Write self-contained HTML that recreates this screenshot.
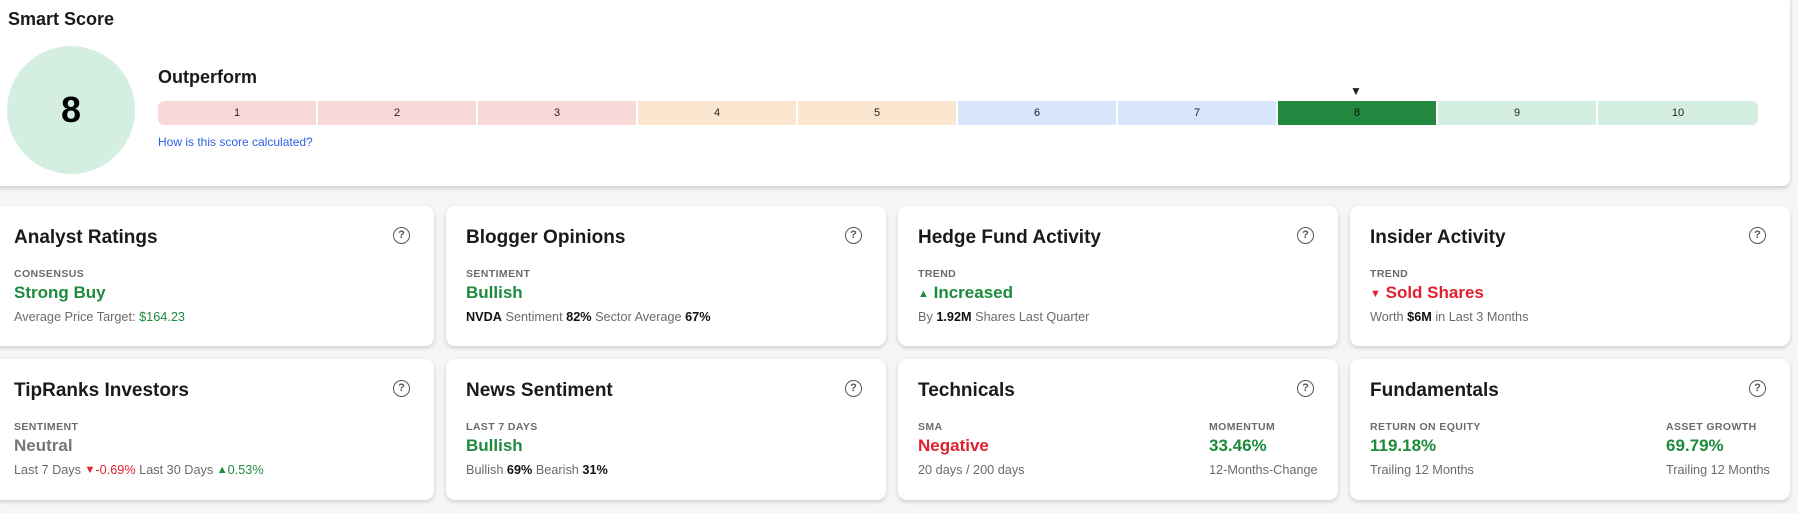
<!DOCTYPE html>
<html><head><meta charset="utf-8"><style>
*{box-sizing:border-box;margin:0;padding:0}
body{width:1798px;height:513px;background:#f5f5f6;font-family:"Liberation Sans",Arial,sans-serif;position:relative;overflow:hidden;color:#1a1a1a}
.top{position:absolute;left:-8px;top:-10px;width:1798px;height:196px;background:#fff;border-radius:8px;box-shadow:0 2px 4px rgba(0,0,0,.18)}
.abs{position:absolute}
.seg{position:absolute;top:101px;height:24px;width:158px;font-size:11px;text-align:center;line-height:24px;color:#222}
.card{position:absolute;width:440px;background:#fff;border-radius:9px;box-shadow:0 2px 4px rgba(0,0,0,.16)}
.r1{top:206px;height:140px}.r2{top:359px;height:141px}
.t{position:absolute;left:20px;top:20px;font-size:19px;font-weight:bold;color:#1a1a1a;line-height:24px}
.q{position:absolute;right:24px;top:21px;width:17px;height:17px;border:1.6px solid #555;border-radius:50%;font-size:11px;font-weight:bold;color:#555;text-align:center;line-height:14px}
.col{position:absolute;top:62px}
.lab{font-size:10.5px;font-weight:bold;color:#6b6b6b;letter-spacing:.4px;line-height:12px}
.val{font-size:17px;font-weight:bold;line-height:20px;height:20px;margin-top:3px}
.sub{font-size:12.7px;color:#6b6b6b;line-height:16px;margin-top:6px;white-space:nowrap}
.sub b{color:#111}
.g{color:#1e8a3c}.r{color:#e0202e}.n{color:#777}
.ar{font-size:11px;line-height:0;vertical-align:1px}
</style></head><body>
<div class="top"></div>
<div class="abs" style="left:8px;top:9px;font-size:18px;font-weight:bold">Smart Score</div>
<div class="abs" style="left:7px;top:46px;width:128px;height:128px;border-radius:50%;background:#d4efe1;text-align:center;line-height:128px;font-size:36px;font-weight:bold;color:#000">8</div>
<div class="abs" style="left:158px;top:67px;font-size:18px;font-weight:bold">Outperform</div>
<div class="abs" style="left:1350px;top:84px;font-size:12px;color:#222">▼</div>
<div class="seg" style="left:158px;background:#f8d9d8;border-radius:6px 0 0 6px">1</div>
<div class="seg" style="left:318px;background:#f8d9d8">2</div>
<div class="seg" style="left:478px;background:#f8d9d8">3</div>
<div class="seg" style="left:638px;background:#fbe7cf">4</div>
<div class="seg" style="left:798px;background:#fbe7cf">5</div>
<div class="seg" style="left:958px;background:#d8e6fb">6</div>
<div class="seg" style="left:1118px;background:#d8e6fb">7</div>
<div class="seg" style="left:1278px;background:#22873f;color:#111">8</div>
<div class="seg" style="left:1438px;background:#d4efe1">9</div>
<div class="seg" style="left:1598px;width:160px;background:#d4efe1;border-radius:0 6px 6px 0">10</div>
<div class="abs" style="left:158px;top:135px;font-size:12px;color:#2f5fe8">How is this score calculated?</div>

<div class="card r1" style="left:-6px"><div class="t" style="left:20px">Analyst Ratings</div><div class="q">?</div>
<div class="col" style="left:20px"><div class="lab">CONSENSUS</div><div class="val g">Strong Buy</div><div class="sub">Average Price Target: <span class="g">$164.23</span></div></div></div>
<div class="card r1" style="left:446px"><div class="t">Blogger Opinions</div><div class="q">?</div>
<div class="col" style="left:20px"><div class="lab">SENTIMENT</div><div class="val g">Bullish</div><div class="sub"><b>NVDA</b> Sentiment <b>82%</b> Sector Average <b>67%</b></div></div></div>
<div class="card r1" style="left:898px"><div class="t">Hedge Fund Activity</div><div class="q">?</div>
<div class="col" style="left:20px"><div class="lab">TREND</div><div class="val g"><span class="ar">▲</span> Increased</div><div class="sub">By <b>1.92M</b> Shares Last Quarter</div></div></div>
<div class="card r1" style="left:1350px"><div class="t">Insider Activity</div><div class="q">?</div>
<div class="col" style="left:20px"><div class="lab">TREND</div><div class="val r"><span class="ar">▼</span> Sold Shares</div><div class="sub">Worth <b>$6M</b> in Last 3 Months</div></div></div>

<div class="card r2" style="left:-6px"><div class="t" style="left:20px">TipRanks Investors</div><div class="q">?</div>
<div class="col" style="left:20px"><div class="lab">SENTIMENT</div><div class="val n">Neutral</div><div class="sub">Last 7 Days <span class="r"><span class="ar">▼</span>-0.69%</span> Last 30 Days <span class="g"><span class="ar">▲</span>0.53%</span></div></div></div>
<div class="card r2" style="left:446px"><div class="t">News Sentiment</div><div class="q">?</div>
<div class="col" style="left:20px"><div class="lab">LAST 7 DAYS</div><div class="val g">Bullish</div><div class="sub">Bullish <b>69%</b> Bearish <b>31%</b></div></div></div>
<div class="card r2" style="left:898px"><div class="t">Technicals</div><div class="q">?</div>
<div class="col" style="left:20px"><div class="lab">SMA</div><div class="val r">Negative</div><div class="sub">20 days / 200 days</div></div>
<div class="col" style="left:311px"><div class="lab">MOMENTUM</div><div class="val g">33.46%</div><div class="sub">12-Months-Change</div></div></div>
<div class="card r2" style="left:1350px"><div class="t">Fundamentals</div><div class="q">?</div>
<div class="col" style="left:20px"><div class="lab">RETURN ON EQUITY</div><div class="val g">119.18%</div><div class="sub">Trailing 12 Months</div></div>
<div class="col" style="left:316px"><div class="lab">ASSET GROWTH</div><div class="val g">69.79%</div><div class="sub">Trailing 12 Months</div></div></div>
</body></html>
